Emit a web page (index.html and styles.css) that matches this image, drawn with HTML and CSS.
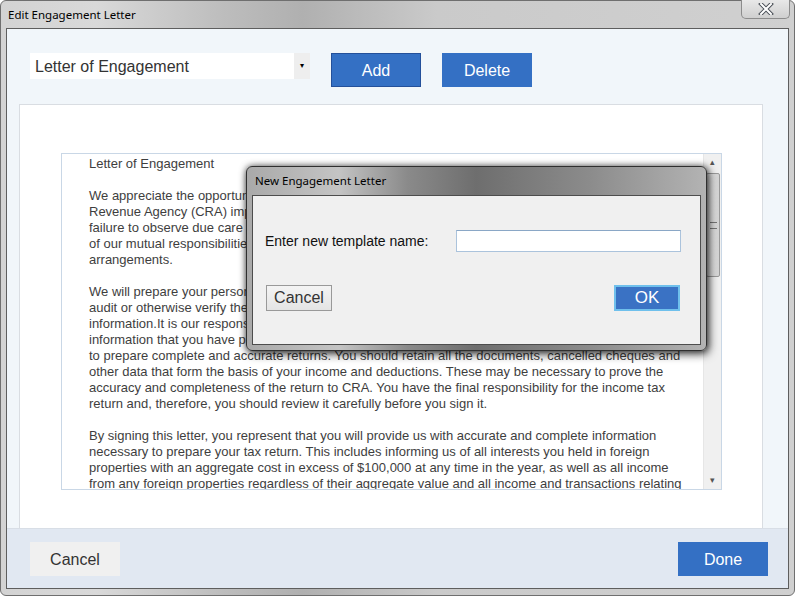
FILE: index.html
```html
<!DOCTYPE html>
<html lang="en">
<head>
    <meta charset="UTF-8">
    <meta name="viewport" content="width=device-width, initial-scale=1.0">
    <title>Edit Engagement Letter</title>
    <link rel="stylesheet" href="styles.css">
</head>
<body>
    <div class="window">
        <div class="titlebar">
            <span class="title">Edit Engagement Letter</span>
            <button class="close-btn" title="Close">
                <svg width="16" height="12" viewBox="0 0 16 12">
                    <path d="M3 1 L13 11 M13 1 L3 11" stroke="#4a4f57" stroke-width="4" stroke-linecap="square"/>
                    <path d="M3 1 L13 11 M13 1 L3 11" stroke="#ffffff" stroke-width="2" stroke-linecap="square"/>
                </svg>
            </button>
        </div>

        <div class="client">
            <div class="toolbar">
                <div class="template-select">
                    <span class="select-value">Letter of Engagement</span>
                    <span class="select-arrow">&#9662;</span>
                </div>
                <button class="btn btn-primary btn-focused">Add</button>
                <button class="btn btn-primary">Delete</button>
            </div>

            <div class="panel">
                <div class="letter-box">
                    <div class="letter-text">
                        <p>Letter of Engagement</p>
                        <p>We appreciate the opportunity to prepare your personal income tax return. The Canada<br>
                        Revenue Agency (CRA) imposes penalties and interest on taxpayers for late filing and for<br>
                        failure to observe due care in reporting income. Accordingly, to ensure an understanding<br>
                        of our mutual responsibilities, we are writing to confirm the terms of our engagement<br>
                        arrangements.</p>
                        <p>We will prepare your personal income tax return from the information you provide. We will not<br>
                        audit or otherwise verify the data you submit, although we may ask for clarification of some<br>
                        information.It is our responsibility to prepare your return in accordance with the Income Tax Act<br>
                        information that you have provided. It is your responsibility to provide all the information required<br>
                        to prepare complete and accurate returns. You should retain all the documents, cancelled cheques and<br>
                        other data that form the basis of your income and deductions. These may be necessary to prove the<br>
                        accuracy and completeness of the return to CRA. You have the final responsibility for the income tax<br>
                        return and, therefore, you should review it carefully before you sign it.</p>
                        <p>By signing this letter, you represent that you will provide us with accurate and complete information<br>
                        necessary to prepare your tax return. This includes informing us of all interests you held in foreign<br>
                        properties with an aggregate cost in excess of $100,000 at any time in the year, as well as all income<br>
                        from any foreign properties regardless of their aggregate value and all income and transactions relating</p>
                    </div>
                    <div class="scrollbar">
                        <span class="scroll-arrow">&#9652;</span>
                        <div class="scroll-track">
                            <div class="scroll-thumb"><span class="grip"></span></div>
                        </div>
                        <span class="scroll-arrow">&#9662;</span>
                    </div>
                </div>
            </div>

            <div class="footer">
                <button class="btn btn-light">Cancel</button>
                <button class="btn btn-primary">Done</button>
            </div>
        </div>

        <div class="modal">
            <div class="modal-title">New Engagement Letter</div>
            <div class="modal-body">
                <div class="modal-row">
                    <label for="templateName" class="modal-label">Enter new template name:</label>
                    <input type="text" id="templateName" class="modal-input">
                </div>
                <div class="modal-actions">
                    <button class="dlg-btn dlg-cancel">Cancel</button>
                    <button class="dlg-btn dlg-ok">OK</button>
                </div>
            </div>
        </div>
    </div>
</body>
</html>
```

FILE: styles.css
```css
body {
    margin: 0;
    padding: 0;
    background-color: #ffffff;
    font-family: "Liberation Sans", Arial, sans-serif;
}

.window {
    position: relative;
    width: 795px;
    height: 596px;
    box-sizing: border-box;
    border: 1px solid #6f6f6f;
    border-radius: 6px;
    padding: 0 5px 6px 5px;
    background: linear-gradient(to right, #d3d3d3 0%, #d9d9d9 12%, #bdbdbd 28%, #b0b0b0 38%, #cacaca 55%, #d0d0d0 100%);
    display: flex;
    flex-direction: column;
}

.titlebar {
    height: 27px;
    display: flex;
    align-items: flex-start;
    justify-content: space-between;
}

.title {
    font-family: "Noto Sans", sans-serif;
    font-size: 11.5px;
    color: #000000;
    margin: 6px 0 0 2px;
}

.close-btn {
    width: 49px;
    height: 19px;
    margin: -1px -1px 0 0;
    padding: 0;
    border: 1px solid #8c8c8c;
    border-top: none;
    border-radius: 0 0 5px 5px;
    background: linear-gradient(#e8e8e8, #cfcfcf);
    display: flex;
    align-items: center;
    justify-content: center;
}

.client {
    flex: 1;
    border: 1px solid #5e5e5e;
    background-color: #f1f6fa;
    display: flex;
    flex-direction: column;
}

.toolbar {
    display: flex;
    align-items: flex-start;
    padding: 24px 0 0 23px;
    height: 51px;
}

.template-select {
    width: 280px;
    height: 26px;
    background-color: #ffffff;
    display: flex;
    align-items: center;
    justify-content: space-between;
    margin-right: 21px;
}

.select-value {
    font-size: 16px;
    color: #333333;
    padding: 2px 0 0 5px;
}

.select-arrow {
    width: 16px;
    height: 26px;
    background-color: #eeeeee;
    font-size: 8px;
    line-height: 26px;
    text-align: center;
    color: #000000;
}

.btn {
    width: 90px;
    height: 34px;
    border: none;
    font-family: "Liberation Sans", Arial, sans-serif;
    font-size: 16px;
    padding-top: 2px;
    cursor: pointer;
}

.btn-primary {
    background-color: #3470c4;
    color: #ffffff;
}

.btn-focused {
    border: 1px solid #24509a;
}

.toolbar .btn {
    margin-right: 21px;
}

.btn-light {
    background-color: #f0f0f0;
    color: #333333;
}

.panel {
    flex: 1;
    margin: 0 25px 0 12px;
    background-color: #ffffff;
    border: 1px solid #d9dde2;
    border-bottom: none;
    padding: 48px 40px 0 41px;
}

.letter-box {
    height: 337px;
    box-sizing: border-box;
    border: 1px solid #c9d7e6;
    display: flex;
}

.letter-text {
    flex: 1;
    overflow: hidden;
    padding: 2px 0 0 27px;
    font-size: 13px;
    line-height: 16px;
    color: #3e3e3e;
    white-space: nowrap;
}

.letter-text p {
    margin: 0 0 16px 0;
}

.scrollbar {
    width: 17px;
    background-color: #f0f0f0;
    border-left: 1px solid #e6e6e6;
    display: flex;
    flex-direction: column;
    align-items: center;
}

.scroll-arrow {
    height: 17px;
    font-size: 9px;
    line-height: 17px;
    color: #555555;
}

.scroll-track {
    flex: 1;
    width: 100%;
}

.scroll-thumb {
    margin: 2px 1px 0 2px;
    height: 102px;
    border: 1px solid #9a9a9a;
    border-radius: 2px;
    background: linear-gradient(to right, #e9e9e9, #d4d4d4);
    display: flex;
    align-items: center;
    justify-content: center;
}

.grip {
    width: 7px;
    height: 5px;
    border-top: 1px solid #777777;
    border-bottom: 1px solid #777777;
}

.footer {
    height: 60px;
    box-sizing: border-box;
    border-top: 1px solid #d8dee6;
    background-color: #e1e8f2;
    display: flex;
    justify-content: space-between;
    align-items: flex-start;
    padding: 13px 20px 0 23px;
}

/* modal dialog on top of the window */
.modal {
    position: absolute;
    left: 245px;
    top: 165px;
    width: 461px;
    height: 185px;
    box-sizing: border-box;
    border: 1px solid #2f2f2f;
    border-radius: 6px;
    padding: 0 5px 5px 5px;
    background: linear-gradient(to right, #a9a9a9 0%, #c4c4c4 20%, #8a8a8a 35%, #6e6e6e 50%, #8c8c8c 75%, #b3b3b3 100%);
    box-shadow: 2px 3px 10px rgba(0, 0, 0, 0.7), 0 0 6px rgba(0, 0, 0, 0.5);
    display: flex;
    flex-direction: column;
}

.modal-title {
    height: 28px;
    box-sizing: border-box;
    padding: 6px 0 0 3px;
    font-family: "Noto Sans", sans-serif;
    font-size: 11.5px;
    color: #000000;
}

.modal-body {
    flex: 1;
    border: 1px solid #4d4d4d;
    background-color: #f0f0f0;
    padding: 34px 19px 0 12px;
}

.modal-row {
    display: flex;
    justify-content: space-between;
    align-items: center;
}

.modal-label {
    font-size: 14px;
    color: #111111;
}

.modal-input {
    width: 225px;
    height: 22px;
    box-sizing: border-box;
    border: 1px solid #abc3dc;
    border-top-color: #8aa7c6;
    background-color: #ffffff;
    outline: none;
}

.modal-actions {
    display: flex;
    justify-content: space-between;
    margin-top: 33px;
    padding: 0 1px 0 1px;
}

.dlg-btn {
    width: 66px;
    height: 26px;
    box-sizing: border-box;
    font-family: "Liberation Sans", Arial, sans-serif;
    font-size: 16px;
    padding: 0;
}

.dlg-cancel {
    border: 1px solid #999999;
    background: linear-gradient(#f4f4f4, #e4e4e4);
    color: #333333;
}

.dlg-ok {
    border: 2px solid #6fc0ec;
    background-color: #3a72c4;
    color: #ffffff;
    font-size: 17px;
}
```
